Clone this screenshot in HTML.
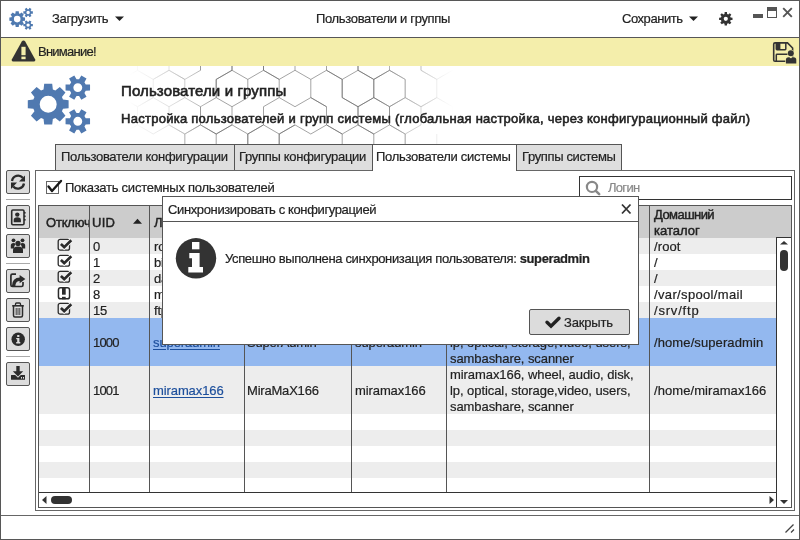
<!DOCTYPE html>
<html><head><meta charset="utf-8"><style>
html,body{margin:0;padding:0;width:800px;height:540px;overflow:hidden;background:#fff;}
body{position:relative;font-family:"Liberation Sans", sans-serif;}
.t{position:absolute;white-space:nowrap;will-change:transform;-webkit-text-stroke:0.2px currentColor;}
.r{position:absolute;}
</style></head><body>
<div class="r" style="left:0px;top:0px;width:800px;height:540px;background:#fff;border:1px solid #575757;box-sizing:border-box;"></div>
<div class="r" style="left:1px;top:37px;width:798px;height:1px;background:#575757;"></div>
<svg class="r" style="left:0px;top:0px;" width="40" height="37" viewBox="0 0 40 37"><path fill="#4f7ab0" fill-rule="evenodd" d="M15.40,13.38 L15.65,11.25 L18.75,11.25 L19.00,13.38 L19.97,13.78 L21.65,12.45 L23.85,14.65 L22.52,16.33 L22.92,17.30 L25.05,17.55 L25.05,20.65 L22.92,20.90 L22.52,21.87 L23.85,23.55 L21.65,25.75 L19.97,24.42 L19.00,24.82 L18.75,26.95 L15.65,26.95 L15.40,24.82 L14.43,24.42 L12.75,25.75 L10.55,23.55 L11.88,21.87 L11.48,20.90 L9.35,20.65 L9.35,17.55 L11.48,17.30 L11.88,16.33 L10.55,14.65 L12.75,12.45 L14.43,13.78 Z M20.50,19.10 A3.3,3.3 0 1,0 13.90,19.10 A3.3,3.3 0 1,0 20.50,19.10 Z M31.19,11.35 L32.86,11.35 L32.86,13.65 L31.19,13.65 L30.64,14.60 L31.48,16.05 L29.49,17.20 L28.65,15.75 L27.55,15.75 L26.71,17.20 L24.72,16.05 L25.56,14.60 L25.01,13.65 L23.34,13.65 L23.34,11.35 L25.01,11.35 L25.56,10.40 L24.72,8.95 L26.71,7.80 L27.55,9.25 L28.65,9.25 L29.49,7.80 L31.48,8.95 L30.64,10.40 Z M29.80,12.50 A1.7,1.7 0 1,0 26.40,12.50 A1.7,1.7 0 1,0 29.80,12.50 Z M31.19,23.95 L32.86,23.95 L32.86,26.25 L31.19,26.25 L30.64,27.20 L31.48,28.65 L29.49,29.80 L28.65,28.35 L27.55,28.35 L26.71,29.80 L24.72,28.65 L25.56,27.20 L25.01,26.25 L23.34,26.25 L23.34,23.95 L25.01,23.95 L25.56,23.00 L24.72,21.55 L26.71,20.40 L27.55,21.85 L28.65,21.85 L29.49,20.40 L31.48,21.55 L30.64,23.00 Z M29.80,25.10 A1.7,1.7 0 1,0 26.40,25.10 A1.7,1.7 0 1,0 29.80,25.10 Z"/></svg>
<div class="t" style="left:51.70px;top:12.00px;font-size:13px;line-height:13px;font-weight:normal;color:#222;letter-spacing:-0.35px;">Загрузить</div>
<svg class="r" style="left:114px;top:15px;" width="11" height="7" viewBox="0 0 11 7"><path d="M1,1.5 L10,1.5 L5.5,6 Z" fill="#222"/></svg>
<div class="t" style="left:316.40px;top:12.00px;font-size:13px;line-height:13px;font-weight:normal;color:#222;letter-spacing:-0.34px;">Пользователи и группы</div>
<div class="t" style="left:621.90px;top:12.00px;font-size:13px;line-height:13px;font-weight:normal;color:#222;letter-spacing:-0.45px;">Сохранить</div>
<svg class="r" style="left:688px;top:15px;" width="11" height="7" viewBox="0 0 11 7"><path d="M1,1.5 L10,1.5 L5.5,6 Z" fill="#222"/></svg>
<svg class="r" style="left:700px;top:0px;" width="100" height="37" viewBox="0 0 100 37"><path fill="#333" fill-rule="evenodd" transform="translate(-700,0)" d="M724.50,13.97 L724.65,12.10 L726.95,12.10 L727.10,13.97 L728.29,14.47 L729.73,13.25 L731.35,14.87 L730.13,16.31 L730.63,17.50 L732.50,17.65 L732.50,19.95 L730.63,20.10 L730.13,21.29 L731.35,22.73 L729.73,24.35 L728.29,23.13 L727.10,23.63 L726.95,25.50 L724.65,25.50 L724.50,23.63 L723.31,23.13 L721.87,24.35 L720.25,22.73 L721.47,21.29 L720.97,20.10 L719.10,19.95 L719.10,17.65 L720.97,17.50 L721.47,16.31 L720.25,14.87 L721.87,13.25 L723.31,14.47 Z M727.90,18.80 A2.1,2.1 0 1,0 723.70,18.80 A2.1,2.1 0 1,0 727.90,18.80 Z"/></svg>
<div class="r" style="left:753px;top:14px;width:10px;height:4px;background:#555;"></div>
<div class="r" style="left:767px;top:7px;width:10px;height:11px;background:#fff;border:1px solid #555;box-sizing:border-box;"></div>
<div class="r" style="left:767px;top:7px;width:10px;height:4px;background:#555;"></div>
<svg class="r" style="left:782px;top:7px;" width="11" height="11" viewBox="0 0 11 11"><path d="M1.2,1.2 L9.8,9.8 M9.8,1.2 L1.2,9.8" stroke="#555" stroke-width="1.9"/></svg>
<div class="r" style="left:1px;top:38px;width:798px;height:28px;background:#f4eeab;"></div>
<svg class="r" style="left:10px;top:39px;" width="27" height="24" viewBox="0 0 27 24"><path d="M13.5,1.5 Q14.5,1.5 15.2,2.6 L25.2,20.5 Q25.8,22.3 24,22.5 L3,22.5 Q1.2,22.3 1.8,20.5 L11.8,2.6 Q12.5,1.5 13.5,1.5 Z" fill="#333"/><rect x="11.4" y="7.8" width="4.2" height="8.4" fill="#f4eeab"/><rect x="11.4" y="17.6" width="4.2" height="2.6" fill="#f4eeab"/></svg>
<div class="t" style="left:38.30px;top:44.50px;font-size:13px;line-height:13px;font-weight:normal;color:#222;letter-spacing:-0.75px;">Внимание!</div>
<svg class="r" style="left:768px;top:38px;" width="32" height="28" viewBox="0 0 32 28"><path d="M7,4.9 L19.5,4.9 L24.6,10 L24.6,22 Q24.6,23.3 23.3,23.3 L7,23.3 Q5.7,23.3 5.7,22 L5.7,6.2 Q5.7,4.9 7,4.9 Z" fill="none" stroke="#333" stroke-width="1.6"/><path d="M8.3,4.9 L8.3,11 Q8.3,11.7 9,11.7 L17.1,11.7 Q17.8,11.7 17.8,11 L17.8,4.9" fill="none" stroke="#333" stroke-width="1.5"/><rect x="8.3" y="4.9" width="4.1" height="6.8" fill="#333"/><path d="M8.3,23.3 L8.3,17 Q8.3,16.3 9,16.3 L21,16.3" fill="none" stroke="#333" stroke-width="1.5"/><circle cx="22.8" cy="15.3" r="3.5" fill="#f4eeab"/><path d="M17.3,26 L17.3,21.2 Q17.3,18.6 19.9,18.6 L26.3,18.6 Q28.9,18.6 28.9,21.2 L28.9,26 Z" fill="#f4eeab"/><circle cx="22.8" cy="15.3" r="3" fill="#333"/><path d="M17.9,25.4 L17.9,21.9 Q17.9,19.2 20.6,19.2 L25.6,19.2 Q28.3,19.2 28.3,21.9 L28.3,25.4 Z" fill="#333"/><rect x="21.8" y="18.9" width="2" height="1.2" fill="#f4eeab"/></svg>
<svg class="r" style="left:100px;top:66px;" width="420" height="79" viewBox="0 0 420 79"><defs><linearGradient id="hg" x1="0" x2="1" y1="0" y2="0"><stop offset="0.07" stop-color="#fff" stop-opacity="0"/><stop offset="0.18" stop-color="#fff" stop-opacity="0.35"/><stop offset="0.27" stop-color="#fff" stop-opacity="0.9"/><stop offset="0.66" stop-color="#fff" stop-opacity="0.9"/><stop offset="0.77" stop-color="#fff" stop-opacity="0.35"/><stop offset="0.84" stop-color="#fff" stop-opacity="0"/></linearGradient><mask id="hm"><rect x="0" y="0" width="420" height="79" fill="url(#hg)"/></mask></defs><g mask="url(#hm)"><path transform="translate(-100,-66)" d="M74.5,15.8L90.2,24.8M90.2,43.0L74.5,52.1M58.8,43.0L58.8,24.8M58.8,24.8L74.5,15.8M121.8,24.8L121.8,43.0M106.0,52.1L90.2,43.0M137.5,15.8L153.2,24.8M153.2,24.8L153.2,43.0M121.8,43.0L121.8,24.8M121.8,24.8L137.5,15.8M169.0,15.8L184.8,24.8M184.8,24.8L184.8,43.0M184.8,43.0L169.0,52.1M153.2,43.0L153.2,24.8M216.2,43.0L200.5,52.1M200.5,52.1L184.8,43.0M184.8,24.8L200.5,15.8M232.0,15.8L247.8,24.8M247.8,24.8L247.8,43.0M247.8,43.0L232.0,52.1M263.5,15.8L279.2,24.8M279.2,24.8L279.2,43.0M279.2,43.0L263.5,52.1M263.5,52.1L247.8,43.0M247.8,43.0L247.8,24.8M295.0,15.8L310.8,24.8M310.8,24.8L310.8,43.0M295.0,52.1L279.2,43.0M279.2,43.0L279.2,24.8M279.2,24.8L295.0,15.8M326.5,15.8L342.2,24.8M342.2,43.0L326.5,52.1M310.8,43.0L310.8,24.8M310.8,24.8L326.5,15.8M373.8,24.8L373.8,43.0M358.0,52.1L342.2,43.0M342.2,43.0L342.2,24.8M342.2,24.8L358.0,15.8M389.5,15.8L405.2,24.8M405.2,24.8L405.2,43.0M405.2,43.0L389.5,52.1M389.5,52.1L373.8,43.0M373.8,43.0L373.8,24.8M373.8,24.8L389.5,15.8M421.0,15.8L436.8,24.8M436.8,24.8L436.8,43.0M436.8,43.0L421.0,52.1M421.0,52.1L405.2,43.0M405.2,24.8L421.0,15.8M452.5,15.8L468.2,24.8M468.2,24.8L468.2,43.0M468.2,43.0L452.5,52.1M436.8,43.0L436.8,24.8M436.8,24.8L452.5,15.8M499.8,24.8L499.8,43.0M468.2,24.8L484.0,15.8M531.2,43.0L515.5,52.1M515.5,52.1L499.8,43.0M499.8,24.8L515.5,15.8M547.0,15.8L562.8,24.8M562.8,24.8L562.8,43.0M562.8,43.0L547.0,52.1M547.0,52.1L531.2,43.0M531.2,24.8L547.0,15.8M578.5,15.8L594.2,24.8M594.2,24.8L594.2,43.0M594.2,43.0L578.5,52.1M625.8,24.8L625.8,43.0M625.8,43.0L610.0,52.1M594.2,24.8L610.0,15.8M58.8,43.0L74.5,52.1M74.5,52.1L74.5,70.3M74.5,70.3L58.8,79.4M58.8,79.4L43.0,70.3M43.0,70.3L43.0,52.1M43.0,52.1L58.8,43.0M90.2,43.0L106.0,52.1M106.0,70.3L90.2,79.4M90.2,79.4L74.5,70.3M74.5,70.3L74.5,52.1M74.5,52.1L90.2,43.0M121.8,43.0L137.5,52.1M137.5,52.1L137.5,70.3M121.8,79.4L106.0,70.3M169.0,70.3L153.2,79.4M200.5,52.1L200.5,70.3M184.8,79.4L169.0,70.3M169.0,70.3L169.0,52.1M232.0,52.1L232.0,70.3M232.0,70.3L216.2,79.4M200.5,70.3L200.5,52.1M200.5,52.1L216.2,43.0M247.8,43.0L263.5,52.1M263.5,52.1L263.5,70.3M232.0,70.3L232.0,52.1M279.2,43.0L295.0,52.1M279.2,79.4L263.5,70.3M263.5,70.3L263.5,52.1M310.8,43.0L326.5,52.1M326.5,70.3L310.8,79.4M310.8,79.4L295.0,70.3M295.0,70.3L295.0,52.1M295.0,52.1L310.8,43.0M358.0,52.1L358.0,70.3M342.2,79.4L326.5,70.3M326.5,70.3L326.5,52.1M326.5,52.1L342.2,43.0M373.8,43.0L389.5,52.1M389.5,70.3L373.8,79.4M373.8,79.4L358.0,70.3M358.0,70.3L358.0,52.1M358.0,52.1L373.8,43.0M405.2,43.0L421.0,52.1M421.0,52.1L421.0,70.3M405.2,79.4L389.5,70.3M389.5,70.3L389.5,52.1M436.8,79.4L421.0,70.3M421.0,70.3L421.0,52.1M421.0,52.1L436.8,43.0M468.2,43.0L484.0,52.1M484.0,52.1L484.0,70.3M484.0,70.3L468.2,79.4M468.2,79.4L452.5,70.3M515.5,70.3L499.8,79.4M499.8,79.4L484.0,70.3M484.0,70.3L484.0,52.1M484.0,52.1L499.8,43.0M531.2,43.0L547.0,52.1M547.0,52.1L547.0,70.3M531.2,79.4L515.5,70.3M515.5,70.3L515.5,52.1M515.5,52.1L531.2,43.0M562.8,43.0L578.5,52.1M578.5,52.1L578.5,70.3M562.8,79.4L547.0,70.3M547.0,70.3L547.0,52.1M547.0,52.1L562.8,43.0M594.2,43.0L610.0,52.1M610.0,52.1L610.0,70.3M610.0,70.3L594.2,79.4M594.2,79.4L578.5,70.3M578.5,70.3L578.5,52.1M90.2,97.6L74.5,106.7M74.5,106.7L58.8,97.6M58.8,79.4L74.5,70.3M106.0,70.3L121.8,79.4M121.8,79.4L121.8,97.6M121.8,97.6L106.0,106.7M106.0,106.7L90.2,97.6M137.5,70.3L153.2,79.4M153.2,79.4L153.2,97.6M153.2,97.6L137.5,106.7M137.5,106.7L121.8,97.6M121.8,97.6L121.8,79.4M121.8,79.4L137.5,70.3M169.0,70.3L184.8,79.4M153.2,79.4L169.0,70.3M216.2,79.4L216.2,97.6M200.5,106.7L184.8,97.6M184.8,97.6L184.8,79.4M184.8,79.4L200.5,70.3M232.0,70.3L247.8,79.4M247.8,79.4L247.8,97.6M247.8,97.6L232.0,106.7M232.0,106.7L216.2,97.6M216.2,97.6L216.2,79.4M216.2,79.4L232.0,70.3M263.5,70.3L279.2,79.4M279.2,97.6L263.5,106.7M247.8,79.4L263.5,70.3M310.8,79.4L310.8,97.6M310.8,97.6L295.0,106.7M295.0,106.7L279.2,97.6M279.2,97.6L279.2,79.4M279.2,79.4L295.0,70.3M326.5,70.3L342.2,79.4M342.2,79.4L342.2,97.6M326.5,106.7L310.8,97.6M358.0,70.3L373.8,79.4M373.8,79.4L373.8,97.6M373.8,97.6L358.0,106.7M358.0,106.7L342.2,97.6M342.2,97.6L342.2,79.4M342.2,79.4L358.0,70.3M389.5,70.3L405.2,79.4M405.2,79.4L405.2,97.6M405.2,97.6L389.5,106.7M389.5,106.7L373.8,97.6M373.8,97.6L373.8,79.4M373.8,79.4L389.5,70.3M421.0,70.3L436.8,79.4M436.8,79.4L436.8,97.6M436.8,97.6L421.0,106.7M421.0,106.7L405.2,97.6M405.2,97.6L405.2,79.4M452.5,70.3L468.2,79.4M468.2,79.4L468.2,97.6M468.2,97.6L452.5,106.7M436.8,79.4L452.5,70.3M484.0,106.7L468.2,97.6M468.2,97.6L468.2,79.4M468.2,79.4L484.0,70.3M531.2,79.4L531.2,97.6M531.2,97.6L515.5,106.7M499.8,97.6L499.8,79.4M499.8,79.4L515.5,70.3M562.8,79.4L562.8,97.6M562.8,97.6L547.0,106.7M547.0,106.7L531.2,97.6M531.2,97.6L531.2,79.4M531.2,79.4L547.0,70.3M594.2,79.4L594.2,97.6M594.2,97.6L578.5,106.7M578.5,106.7L562.8,97.6M562.8,79.4L578.5,70.3M610.0,70.3L625.8,79.4M625.8,97.6L610.0,106.7M610.0,106.7L594.2,97.6M594.2,79.4L610.0,70.3M58.8,97.6L74.5,106.7M74.5,106.7L74.5,124.9M58.8,134.0L43.0,124.9M43.0,124.9L43.0,106.7M43.0,106.7L58.8,97.6M90.2,134.0L74.5,124.9M121.8,97.6L137.5,106.7M137.5,106.7L137.5,124.9M137.5,124.9L121.8,134.0M106.0,106.7L121.8,97.6M153.2,97.6L169.0,106.7M169.0,106.7L169.0,124.9M137.5,124.9L137.5,106.7M137.5,106.7L153.2,97.6M200.5,106.7L200.5,124.9M200.5,124.9L184.8,134.0M184.8,134.0L169.0,124.9M169.0,106.7L184.8,97.6M232.0,106.7L232.0,124.9M232.0,124.9L216.2,134.0M216.2,134.0L200.5,124.9M200.5,124.9L200.5,106.7M200.5,106.7L216.2,97.6M263.5,124.9L247.8,134.0M295.0,124.9L279.2,134.0M279.2,134.0L263.5,124.9M263.5,124.9L263.5,106.7M310.8,97.6L326.5,106.7M326.5,124.9L310.8,134.0M342.2,97.6L358.0,106.7M358.0,106.7L358.0,124.9M342.2,134.0L326.5,124.9M326.5,124.9L326.5,106.7M373.8,97.6L389.5,106.7M389.5,106.7L389.5,124.9M389.5,124.9L373.8,134.0M373.8,134.0L358.0,124.9M358.0,124.9L358.0,106.7M358.0,106.7L373.8,97.6M405.2,97.6L421.0,106.7M421.0,106.7L421.0,124.9M421.0,124.9L405.2,134.0M405.2,134.0L389.5,124.9M389.5,124.9L389.5,106.7M389.5,106.7L405.2,97.6M436.8,97.6L452.5,106.7M452.5,106.7L452.5,124.9M421.0,106.7L436.8,97.6M468.2,134.0L452.5,124.9M452.5,124.9L452.5,106.7M452.5,106.7L468.2,97.6M499.8,134.0L484.0,124.9M484.0,106.7L499.8,97.6M547.0,106.7L547.0,124.9M547.0,124.9L531.2,134.0M531.2,134.0L515.5,124.9M515.5,106.7L531.2,97.6M562.8,97.6L578.5,106.7M578.5,106.7L578.5,124.9M562.8,134.0L547.0,124.9M547.0,124.9L547.0,106.7M547.0,106.7L562.8,97.6M610.0,106.7L610.0,124.9M578.5,106.7L594.2,97.6M90.2,152.2L74.5,161.2M58.8,152.2L58.8,134.0M58.8,134.0L74.5,124.9M106.0,124.9L121.8,134.0M121.8,134.0L121.8,152.2M121.8,152.2L106.0,161.2M106.0,161.2L90.2,152.2M90.2,152.2L90.2,134.0M90.2,134.0L106.0,124.9M137.5,124.9L153.2,134.0M153.2,152.2L137.5,161.2M137.5,161.2L121.8,152.2M121.8,134.0L137.5,124.9M169.0,124.9L184.8,134.0M184.8,134.0L184.8,152.2M184.8,152.2L169.0,161.2M169.0,161.2L153.2,152.2M153.2,134.0L169.0,124.9M200.5,124.9L216.2,134.0M216.2,134.0L216.2,152.2M216.2,152.2L200.5,161.2M200.5,161.2L184.8,152.2M184.8,152.2L184.8,134.0M184.8,134.0L200.5,124.9M232.0,124.9L247.8,134.0M247.8,134.0L247.8,152.2M216.2,134.0L232.0,124.9M279.2,134.0L279.2,152.2M279.2,152.2L263.5,161.2M263.5,161.2L247.8,152.2M247.8,152.2L247.8,134.0M247.8,134.0L263.5,124.9M295.0,124.9L310.8,134.0M310.8,152.2L295.0,161.2M295.0,161.2L279.2,152.2M279.2,152.2L279.2,134.0M279.2,134.0L295.0,124.9M326.5,124.9L342.2,134.0M342.2,152.2L326.5,161.2M358.0,124.9L373.8,134.0M373.8,152.2L358.0,161.2M358.0,161.2L342.2,152.2M342.2,152.2L342.2,134.0M342.2,134.0L358.0,124.9M389.5,124.9L405.2,134.0M405.2,134.0L405.2,152.2M405.2,152.2L389.5,161.2M389.5,161.2L373.8,152.2M373.8,152.2L373.8,134.0M436.8,152.2L421.0,161.2M421.0,161.2L405.2,152.2M405.2,152.2L405.2,134.0M468.2,152.2L452.5,161.2M452.5,161.2L436.8,152.2M436.8,152.2L436.8,134.0M484.0,124.9L499.8,134.0M499.8,134.0L499.8,152.2M499.8,152.2L484.0,161.2M468.2,152.2L468.2,134.0M515.5,124.9L531.2,134.0M531.2,134.0L531.2,152.2M515.5,161.2L499.8,152.2M499.8,152.2L499.8,134.0M499.8,134.0L515.5,124.9M547.0,124.9L562.8,134.0M547.0,161.2L531.2,152.2M531.2,134.0L547.0,124.9M594.2,134.0L594.2,152.2M594.2,152.2L578.5,161.2M562.8,152.2L562.8,134.0M562.8,134.0L578.5,124.9M610.0,124.9L625.8,134.0M625.8,134.0L625.8,152.2M610.0,161.2L594.2,152.2M594.2,152.2L594.2,134.0" stroke="#555" stroke-width="0.7" fill="none" opacity="0.85"/></g></svg>
<svg class="r" style="left:0px;top:66px;" width="110" height="78" viewBox="0 0 110 78"><path fill="#5079b0" fill-rule="evenodd" transform="translate(0,-66)" d="M43.55,89.41 L44.20,83.79 L52.20,83.79 L52.85,89.41 L55.37,90.46 L59.80,86.94 L65.46,92.60 L61.94,97.03 L62.99,99.55 L68.61,100.20 L68.61,108.20 L62.99,108.85 L61.94,111.37 L65.46,115.80 L59.80,121.46 L55.37,117.94 L52.85,118.99 L52.20,124.61 L44.20,124.61 L43.55,118.99 L41.03,117.94 L36.60,121.46 L30.94,115.80 L34.46,111.37 L33.41,108.85 L27.79,108.20 L27.79,100.20 L33.41,99.55 L34.46,97.03 L30.94,92.60 L36.60,86.94 L41.03,90.46 Z M56.70,104.20 A8.5,8.5 0 1,0 39.70,104.20 A8.5,8.5 0 1,0 56.70,104.20 Z M85.71,84.50 L90.04,84.60 L90.04,90.60 L85.71,90.70 L84.44,92.90 L86.52,96.70 L81.32,99.70 L79.07,96.00 L76.53,96.00 L74.28,99.70 L69.08,96.70 L71.16,92.90 L69.89,90.70 L65.56,90.60 L65.56,84.60 L69.89,84.50 L71.16,82.30 L69.08,78.50 L74.28,75.50 L76.53,79.20 L79.07,79.20 L81.32,75.50 L86.52,78.50 L84.44,82.30 Z M82.25,87.60 A4.45,4.45 0 1,0 73.35,87.60 A4.45,4.45 0 1,0 82.25,87.60 Z M85.71,118.20 L90.04,118.30 L90.04,124.30 L85.71,124.40 L84.44,126.60 L86.52,130.40 L81.32,133.40 L79.07,129.70 L76.53,129.70 L74.28,133.40 L69.08,130.40 L71.16,126.60 L69.89,124.40 L65.56,124.30 L65.56,118.30 L69.89,118.20 L71.16,116.00 L69.08,112.20 L74.28,109.20 L76.53,112.90 L79.07,112.90 L81.32,109.20 L86.52,112.20 L84.44,116.00 Z M82.25,121.30 A4.45,4.45 0 1,0 73.35,121.30 A4.45,4.45 0 1,0 82.25,121.30 Z"/></svg>
<div class="t" style="left:120.70px;top:83.30px;font-size:15px;line-height:15px;font-weight:normal;color:#222;letter-spacing:0.12px;-webkit-text-stroke:0.6px currentColor;">Пользователи и группы</div>
<div class="t" style="left:120.90px;top:111.50px;font-size:13px;line-height:13px;font-weight:normal;color:#222;letter-spacing:0.27px;-webkit-text-stroke:0.55px currentColor;">Настройка пользователей и групп системы (глобальная настройка, через конфигурационный файл)</div>
<div class="r" style="left:55px;top:144px;width:180px;height:27px;background:#dedede;border:1px solid #555;box-sizing:border-box;"></div>
<div class="r" style="left:234px;top:144px;width:139px;height:27px;background:#dedede;border:1px solid #555;box-sizing:border-box;"></div>
<div class="r" style="left:516px;top:144px;width:106px;height:27px;background:#dedede;border:1px solid #555;box-sizing:border-box;"></div>
<div class="t" style="left:60.60px;top:150.20px;font-size:13px;line-height:13px;font-weight:normal;color:#222;letter-spacing:-0.3px;">Пользователи конфигурации</div>
<div class="t" style="left:239.00px;top:150.20px;font-size:13px;line-height:13px;font-weight:normal;color:#222;letter-spacing:-0.3px;">Группы конфигурации</div>
<div class="t" style="left:522.00px;top:150.20px;font-size:13px;line-height:13px;font-weight:normal;color:#222;letter-spacing:-0.36px;">Группы системы</div>
<div class="r" style="left:35px;top:170px;width:760px;height:341px;background:#fff;border:1px solid #666;box-sizing:border-box;"></div>
<div class="r" style="left:372px;top:144px;width:145px;height:27px;background:#fff;border:1px solid #555;box-sizing:border-box;border-bottom:none;"></div>
<div class="t" style="left:375.70px;top:150.20px;font-size:13px;line-height:13px;font-weight:normal;color:#222;letter-spacing:-0.28px;">Пользователи системы</div>
<div class="r" style="left:1px;top:515px;width:798px;height:1px;background:#666;"></div>
<svg class="r" style="left:780px;top:520px;" width="18" height="18" viewBox="0 0 18 18"><path d="M5.5,12.5 L13.5,4.5 M11,12.5 L14,9.5" stroke="#444" stroke-width="1.3"/></svg>
<div class="r" style="left:46px;top:181px;width:13px;height:13px;background:#fff;border:1px solid #666;box-sizing:border-box;"></div>
<svg class="r" style="left:44px;top:176px;" width="20" height="20" viewBox="0 0 20 20"><path d="M4.5,10.5 L8,15 L17,5" stroke="#1a1a1a" stroke-width="2.4" fill="none" stroke-linecap="round" stroke-linejoin="round"/></svg>
<div class="t" style="left:65.20px;top:180.50px;font-size:13px;line-height:13px;font-weight:normal;color:#222;letter-spacing:-0.25px;">Показать системных пользователей</div>
<div class="r" style="left:579px;top:176px;width:213px;height:24px;background:#fff;border:1px solid #333;box-sizing:border-box;"></div>
<svg class="r" style="left:584px;top:179px;" width="20" height="20" viewBox="0 0 20 20"><circle cx="8" cy="7.9" r="5.1" stroke="#888" stroke-width="2.2" fill="none"/><path d="M11.8,11.8 L15.2,15.2" stroke="#888" stroke-width="2.5" stroke-linecap="round"/></svg>
<div class="t" style="left:608.00px;top:180.70px;font-size:13px;line-height:13px;font-weight:normal;color:#888;letter-spacing:-0.7px;">Логин</div>
<div class="r" style="left:6px;top:170px;width:24px;height:24px;background:#dcdcdc;border:1px solid #555;box-sizing:border-box;border-radius:2px;"></div>
<svg class="r" style="left:6px;top:170px;" width="24" height="24" viewBox="0 0 24 24"><path d="M6,11 A6.2,6.2 0 0 1 16.8,7.8" stroke="#2b2b2b" stroke-width="2.3" fill="none"/><path d="M19,5.5 L19,11.5 L13,11.5 Z" fill="#2b2b2b"/><path d="M18,13.5 A6.2,6.2 0 0 1 7.2,16.5" stroke="#2b2b2b" stroke-width="2.3" fill="none"/><path d="M5,19 L5,12.5 L11,12.5 Z" fill="#2b2b2b"/></svg>
<div class="r" style="left:6px;top:199px;width:24px;height:1px;background:#aaa;"></div>
<div class="r" style="left:6px;top:205px;width:24px;height:24px;background:#dcdcdc;border:1px solid #555;box-sizing:border-box;border-radius:2px;"></div>
<svg class="r" style="left:6px;top:205px;" width="24" height="24" viewBox="0 0 24 24"><rect x="5.7" y="5" width="12.3" height="14.8" rx="1.2" fill="none" stroke="#2b2b2b" stroke-width="1.6"/><circle cx="11.3" cy="9.6" r="2.2" fill="#2b2b2b"/><path d="M7.7,17.2 L7.7,15 Q7.7,12.3 11.3,12.3 Q14.9,12.3 14.9,15 L14.9,17.2 Z" fill="#2b2b2b"/><rect x="18" y="7" width="1.6" height="1.6" fill="#2b2b2b"/><rect x="18" y="10.5" width="1.6" height="1.6" fill="#2b2b2b"/><rect x="18" y="14" width="1.6" height="1.6" fill="#2b2b2b"/></svg>
<div class="r" style="left:6px;top:234px;width:24px;height:24px;background:#dcdcdc;border:1px solid #555;box-sizing:border-box;border-radius:2px;"></div>
<svg class="r" style="left:6px;top:234px;" width="24" height="24" viewBox="0 0 24 24"><circle cx="12" cy="9.4" r="2.6" fill="#2b2b2b"/><path d="M7,19 L7,16 Q7,12.5 12,12.5 Q17,12.5 17,16 L17,19 Z" fill="#2b2b2b"/><circle cx="7.5" cy="6.3" r="1.9" fill="#2b2b2b"/><circle cx="16.5" cy="6.3" r="1.9" fill="#2b2b2b"/><path d="M4.8,14.5 L4.8,11.5 Q4.8,9 7.5,9 Q9,9 9.6,10.2 Q8,11.5 8,14.5 Z" fill="#2b2b2b"/><path d="M19.2,14.5 L19.2,11.5 Q19.2,9 16.5,9 Q15,9 14.4,10.2 Q16,11.5 16,14.5 Z" fill="#2b2b2b"/></svg>
<div class="r" style="left:6px;top:263px;width:24px;height:1px;background:#aaa;"></div>
<div class="r" style="left:6px;top:269px;width:24px;height:24px;background:#dcdcdc;border:1px solid #555;box-sizing:border-box;border-radius:2px;"></div>
<svg class="r" style="left:6px;top:269px;" width="24" height="24" viewBox="0 0 24 24"><path d="M10,5.2 L6.4,5.2 Q4.9,5.2 4.9,6.7 L4.9,16 Q4.9,17.5 6.4,17.5 L15.5,17.5 Q17,17.5 17,16 L17,13" fill="none" stroke="#2b2b2b" stroke-width="1.7"/><path d="M7.6,17.2 Q7.8,10.3 14,10.3" fill="none" stroke="#2b2b2b" stroke-width="3.4"/><path d="M13.6,6 L19.4,10.1 L13.6,14.2 Z" fill="#2b2b2b"/></svg>
<div class="r" style="left:6px;top:298px;width:24px;height:24px;background:#dcdcdc;border:1px solid #555;box-sizing:border-box;border-radius:2px;"></div>
<svg class="r" style="left:6px;top:298px;" width="24" height="24" viewBox="0 0 24 24"><path d="M6.2,7.8 L17.8,7.8" stroke="#2b2b2b" stroke-width="1.6"/><path d="M9.5,7.5 L9.5,6 Q9.5,5 10.5,5 L13.5,5 Q14.5,5 14.5,6 L14.5,7.5" fill="none" stroke="#2b2b2b" stroke-width="1.3"/><path d="M7.5,8 L7.5,17.5 Q7.5,19 9,19 L15,19 Q16.5,19 16.5,17.5 L16.5,8" fill="none" stroke="#2b2b2b" stroke-width="1.5"/><path d="M10.2,10 L10.2,17 M12,10 L12,17 M13.8,10 L13.8,17" stroke="#2b2b2b" stroke-width="0.9"/></svg>
<div class="r" style="left:6px;top:327px;width:24px;height:24px;background:#dcdcdc;border:1px solid #555;box-sizing:border-box;border-radius:2px;"></div>
<svg class="r" style="left:6px;top:327px;" width="24" height="24" viewBox="0 0 24 24"><circle cx="12.2" cy="12.2" r="6.7" fill="#2b2b2b"/><rect x="11.2" y="8" width="2.2" height="2" fill="#dcdcdc"/><path d="M10.2,11 L13.4,11 L13.4,15 L14.3,15 L14.3,16.5 L10.2,16.5 L10.2,15 L11.2,15 L11.2,12.3 L10.2,12.3 Z" fill="#dcdcdc"/></svg>
<div class="r" style="left:6px;top:356px;width:24px;height:1px;background:#aaa;"></div>
<div class="r" style="left:6px;top:362px;width:24px;height:24px;background:#dcdcdc;border:1px solid #555;box-sizing:border-box;border-radius:2px;"></div>
<svg class="r" style="left:6px;top:362px;" width="24" height="24" viewBox="0 0 24 24"><path d="M10.3,4 L13.7,4 L13.7,9.3 L17.2,9.3 L12,14.5 L6.8,9.3 L10.3,9.3 Z" fill="#2b2b2b"/><path d="M5.3,13 L9.2,13 L12,15.8 L14.8,13 L18.7,13 Q19,13 19,13.5 L19,17.3 Q19,17.8 18.5,17.8 L5.5,17.8 Q5,17.8 5,17.3 L5,13.5 Q5,13 5.3,13 Z" fill="#2b2b2b"/><rect x="15" y="15" width="1" height="1.6" fill="#dcdcdc"/><rect x="17" y="15" width="1" height="1.6" fill="#dcdcdc"/></svg>
<div class="r" style="left:38px;top:205px;width:754px;height:303px;background:#fff;border:1px solid #555;box-sizing:border-box;"></div>
<div class="r" style="left:39px;top:206px;width:737px;height:32px;background:#cccccc;"></div>
<div class="r" style="left:776px;top:206px;width:15px;height:31px;background:#cccccc;"></div>
<div class="r" style="left:39px;top:238px;width:737px;height:16px;background:#ededed;"></div>
<div class="r" style="left:39px;top:270px;width:737px;height:16px;background:#ededed;"></div>
<div class="r" style="left:39px;top:302px;width:737px;height:16px;background:#ededed;"></div>
<div class="r" style="left:39px;top:318px;width:737px;height:48px;background:#93b8ef;"></div>
<div class="r" style="left:39px;top:366px;width:737px;height:48px;background:#ededed;"></div>
<div class="r" style="left:39px;top:430px;width:737px;height:16px;background:#ededed;"></div>
<div class="r" style="left:39px;top:462px;width:737px;height:16px;background:#ededed;"></div>
<div class="r" style="left:89px;top:206px;width:1px;height:286px;background:#555;"></div>
<div class="r" style="left:149px;top:206px;width:1px;height:286px;background:#555;"></div>
<div class="r" style="left:244px;top:206px;width:1px;height:286px;background:#555;"></div>
<div class="r" style="left:351px;top:206px;width:1px;height:286px;background:#555;"></div>
<div class="r" style="left:446px;top:206px;width:1px;height:286px;background:#555;"></div>
<div class="r" style="left:649px;top:206px;width:1px;height:286px;background:#555;"></div>
<div class="t" style="left:45.60px;top:215.50px;font-size:13px;line-height:13px;font-weight:normal;color:#222;letter-spacing:-0.2px;width:43px;overflow:hidden;-webkit-text-stroke:0.45px currentColor;">Отключ</div>
<div class="t" style="left:92.00px;top:215.50px;font-size:13px;line-height:13px;font-weight:normal;color:#222;letter-spacing:0.3px;-webkit-text-stroke:0.45px currentColor;">UID</div>
<svg class="r" style="left:132px;top:217px;" width="12" height="8" viewBox="0 0 12 8"><path d="M1,6.8 L10,6.8 L5.5,1.8 Z" fill="#222"/></svg>
<div class="t" style="left:153.50px;top:215.50px;font-size:13px;line-height:13px;font-weight:normal;color:#222;letter-spacing:0px;-webkit-text-stroke:0.45px currentColor;">Л</div>
<div class="t" style="left:653.60px;top:208.00px;font-size:13px;line-height:13px;font-weight:normal;color:#222;letter-spacing:-0.55px;-webkit-text-stroke:0.45px currentColor;">Домашний</div>
<div class="t" style="left:653.60px;top:224.00px;font-size:13px;line-height:13px;font-weight:normal;color:#222;letter-spacing:0px;-webkit-text-stroke:0.45px currentColor;">каталог</div>
<svg class="r" style="left:55px;top:237px;" width="20" height="16" viewBox="0 0 20 16"><rect x="3.2" y="2.4" width="11.3" height="10.8" rx="2" fill="none" stroke="#2b2b2b" stroke-width="1.3"/><path d="M5.9,7 L9.2,10.1 L16.3,3.3" stroke="#f4f4f4" stroke-width="4.6" fill="none"/><path d="M5.9,7 L9.2,10.1 L16.3,3.3" stroke="#2b2b2b" stroke-width="2.7" fill="none"/></svg>
<svg class="r" style="left:55px;top:253px;" width="20" height="16" viewBox="0 0 20 16"><rect x="3.2" y="2.4" width="11.3" height="10.8" rx="2" fill="none" stroke="#2b2b2b" stroke-width="1.3"/><path d="M5.9,7 L9.2,10.1 L16.3,3.3" stroke="#fff" stroke-width="4.6" fill="none"/><path d="M5.9,7 L9.2,10.1 L16.3,3.3" stroke="#2b2b2b" stroke-width="2.7" fill="none"/></svg>
<svg class="r" style="left:55px;top:269px;" width="20" height="16" viewBox="0 0 20 16"><rect x="3.2" y="2.4" width="11.3" height="10.8" rx="2" fill="none" stroke="#2b2b2b" stroke-width="1.3"/><path d="M5.9,7 L9.2,10.1 L16.3,3.3" stroke="#f4f4f4" stroke-width="4.6" fill="none"/><path d="M5.9,7 L9.2,10.1 L16.3,3.3" stroke="#2b2b2b" stroke-width="2.7" fill="none"/></svg>
<svg class="r" style="left:55px;top:285px;" width="20" height="16" viewBox="0 0 20 16"><rect x="3.45" y="2.75" width="11.1" height="11.1" rx="2.2" fill="none" stroke="#2b2b2b" stroke-width="1.5"/><rect x="7" y="2.5" width="3.7" height="7.2" fill="#2b2b2b"/><rect x="7" y="11.8" width="3.7" height="2.5" fill="#2b2b2b"/></svg>
<svg class="r" style="left:55px;top:301px;" width="20" height="16" viewBox="0 0 20 16"><rect x="3.2" y="2.4" width="11.3" height="10.8" rx="2" fill="none" stroke="#2b2b2b" stroke-width="1.3"/><path d="M5.9,7 L9.2,10.1 L16.3,3.3" stroke="#f4f4f4" stroke-width="4.6" fill="none"/><path d="M5.9,7 L9.2,10.1 L16.3,3.3" stroke="#2b2b2b" stroke-width="2.7" fill="none"/></svg>
<div class="t" style="left:93.30px;top:239.50px;font-size:13px;line-height:13px;font-weight:normal;color:#222;letter-spacing:-0.3px;">0</div>
<div class="t" style="left:153.50px;top:239.50px;font-size:13px;line-height:13px;font-weight:normal;color:#222;letter-spacing:-0.2px;">root</div>
<div class="t" style="left:653.80px;top:239.50px;font-size:13px;line-height:13px;font-weight:normal;color:#222;letter-spacing:0.1px;">/root</div>
<div class="t" style="left:93.30px;top:255.50px;font-size:13px;line-height:13px;font-weight:normal;color:#222;letter-spacing:-0.3px;">1</div>
<div class="t" style="left:153.50px;top:255.50px;font-size:13px;line-height:13px;font-weight:normal;color:#222;letter-spacing:-0.2px;">bin</div>
<div class="t" style="left:653.80px;top:255.50px;font-size:13px;line-height:13px;font-weight:normal;color:#222;letter-spacing:0.1px;">/</div>
<div class="t" style="left:93.30px;top:271.50px;font-size:13px;line-height:13px;font-weight:normal;color:#222;letter-spacing:-0.3px;">2</div>
<div class="t" style="left:153.50px;top:271.50px;font-size:13px;line-height:13px;font-weight:normal;color:#222;letter-spacing:-0.2px;">daemon</div>
<div class="t" style="left:653.80px;top:271.50px;font-size:13px;line-height:13px;font-weight:normal;color:#222;letter-spacing:0.1px;">/</div>
<div class="t" style="left:93.30px;top:287.50px;font-size:13px;line-height:13px;font-weight:normal;color:#222;letter-spacing:-0.3px;">8</div>
<div class="t" style="left:153.50px;top:287.50px;font-size:13px;line-height:13px;font-weight:normal;color:#222;letter-spacing:-0.2px;">mail</div>
<div class="t" style="left:653.80px;top:287.50px;font-size:13px;line-height:13px;font-weight:normal;color:#222;letter-spacing:0.35px;">/var/spool/mail</div>
<div class="t" style="left:93.30px;top:303.50px;font-size:13px;line-height:13px;font-weight:normal;color:#222;letter-spacing:-0.3px;">15</div>
<div class="t" style="left:153.50px;top:303.50px;font-size:13px;line-height:13px;font-weight:normal;color:#222;letter-spacing:-0.2px;">ftp</div>
<div class="t" style="left:653.80px;top:303.50px;font-size:13px;line-height:13px;font-weight:normal;color:#222;letter-spacing:0.8px;">/srv/ftp</div>
<div class="t" style="left:93.40px;top:335.50px;font-size:13px;line-height:13px;font-weight:normal;color:#222;letter-spacing:-0.8px;">1000</div>
<div class="t" style="left:153.00px;top:335.50px;font-size:13px;line-height:13px;font-weight:normal;color:#1d4f9c;letter-spacing:-0.1px;text-decoration:underline;text-underline-offset:2px;">superadmin</div>
<div class="t" style="left:247.30px;top:335.50px;font-size:13px;line-height:13px;font-weight:normal;color:#222;letter-spacing:-0.2px;">SuperAdmin</div>
<div class="t" style="left:354.70px;top:335.50px;font-size:13px;line-height:13px;font-weight:normal;color:#222;letter-spacing:-0.1px;">superadmin</div>
<div class="t" style="left:449.50px;top:319.50px;font-size:13px;line-height:13px;font-weight:normal;color:#222;letter-spacing:-0.07px;">superadmin, wheel, audio, disk,</div>
<div class="t" style="left:449.50px;top:335.50px;font-size:13px;line-height:13px;font-weight:normal;color:#222;letter-spacing:-0.07px;">lp, optical, storage,video, users,</div>
<div class="t" style="left:449.50px;top:351.50px;font-size:13px;line-height:13px;font-weight:normal;color:#222;letter-spacing:-0.07px;">sambashare, scanner</div>
<div class="t" style="left:653.80px;top:335.50px;font-size:13px;line-height:13px;font-weight:normal;color:#222;letter-spacing:0.1px;">/home/superadmin</div>
<div class="t" style="left:93.40px;top:383.50px;font-size:13px;line-height:13px;font-weight:normal;color:#222;letter-spacing:-0.8px;">1001</div>
<div class="t" style="left:153.00px;top:383.50px;font-size:13px;line-height:13px;font-weight:normal;color:#1d4f9c;letter-spacing:-0.1px;text-decoration:underline;text-underline-offset:2px;">miramax166</div>
<div class="t" style="left:247.30px;top:383.50px;font-size:13px;line-height:13px;font-weight:normal;color:#222;letter-spacing:-0.2px;">MiraMaX166</div>
<div class="t" style="left:354.50px;top:383.50px;font-size:13px;line-height:13px;font-weight:normal;color:#222;letter-spacing:-0.1px;">miramax166</div>
<div class="t" style="left:449.50px;top:367.50px;font-size:13px;line-height:13px;font-weight:normal;color:#222;letter-spacing:-0.07px;">miramax166, wheel, audio, disk,</div>
<div class="t" style="left:449.50px;top:383.50px;font-size:13px;line-height:13px;font-weight:normal;color:#222;letter-spacing:-0.07px;">lp, optical, storage,video, users,</div>
<div class="t" style="left:449.50px;top:399.50px;font-size:13px;line-height:13px;font-weight:normal;color:#222;letter-spacing:-0.07px;">sambashare, scanner</div>
<div class="t" style="left:653.80px;top:383.50px;font-size:13px;line-height:13px;font-weight:normal;color:#222;letter-spacing:0.07px;">/home/miramax166</div>
<div class="r" style="left:39px;top:492px;width:737px;height:1px;background:#333;"></div>
<svg class="r" style="left:40px;top:494px;" width="10" height="12" viewBox="0 0 10 12"><path d="M6.5,2 L6.5,10 L2,6 Z" fill="#333"/></svg>
<div class="r" style="left:51px;top:496px;width:21px;height:8px;background:#333;border-radius:4px;"></div>
<svg class="r" style="left:766px;top:494px;" width="10" height="12" viewBox="0 0 10 12"><path d="M3.5,2 L3.5,10 L8,6 Z" fill="#333"/></svg>
<div class="r" style="left:776px;top:237px;width:1px;height:270px;background:#333;"></div>
<div class="r" style="left:777px;top:237px;width:14px;height:1px;background:#333;"></div>
<div class="r" style="left:777px;top:238px;width:14px;height:269px;background:#fff;"></div>
<svg class="r" style="left:777px;top:238px;" width="14" height="10" viewBox="0 0 14 10"><path d="M3,6.5 L11,6.5 L7,3 Z" fill="#333"/></svg>
<div class="r" style="left:780px;top:250px;width:8px;height:21px;background:#333;border-radius:4px;"></div>
<svg class="r" style="left:777px;top:497px;" width="14" height="10" viewBox="0 0 14 10"><path d="M3,3 L11,3 L7,7 Z" fill="#333"/></svg>
<div class="r" style="left:162px;top:196px;width:477px;height:149px;background:#fff;border:1px solid #555;box-sizing:border-box;"></div>
<div class="r" style="left:163px;top:221px;width:475px;height:1px;background:#555;"></div>
<div class="t" style="left:167.50px;top:202.70px;font-size:13px;line-height:13px;font-weight:normal;color:#222;letter-spacing:-0.37px;">Синхронизировать с конфигурацией</div>
<svg class="r" style="left:618px;top:201px;" width="16" height="16" viewBox="0 0 16 16"><path d="M4,3.5 L12.5,12.5 M12.5,3.5 L4,12.5" stroke="#333" stroke-width="1.8"/></svg>
<svg class="r" style="left:170px;top:232px;" width="52" height="52" viewBox="0 0 52 52"><circle cx="26" cy="26.3" r="20.2" fill="#333"/><rect x="22" y="10" width="7.4" height="7.3" fill="#fff"/><path d="M19.3,21 L29.6,21 L29.6,35 L33,35 L33,40.4 L18.3,40.4 L18.3,35 L22,35 L22,26.3 L19.3,26.3 Z" fill="#fff"/></svg>
<div class="t" style="left:225.00px;top:251.60px;font-size:13px;line-height:13px;font-weight:normal;color:#222;letter-spacing:-0.36px;">Успешно выполнена синхронизация пользователя: <b style="letter-spacing:-0.4px">superadmin</b></div>
<div class="r" style="left:529px;top:309px;width:101px;height:26px;background:#dcdcdc;border:1px solid #555;box-sizing:border-box;border-radius:2px;"></div>
<svg class="r" style="left:543px;top:312px;" width="20" height="20" viewBox="0 0 20 20"><path d="M4,10.3 L8,14.2 L16,6.2" stroke="#222" stroke-width="3.4" fill="none" stroke-linecap="round"/></svg>
<div class="t" style="left:563.70px;top:316.00px;font-size:13px;line-height:13px;font-weight:normal;color:#222;letter-spacing:-0.17px;">Закрыть</div>
</body></html>
